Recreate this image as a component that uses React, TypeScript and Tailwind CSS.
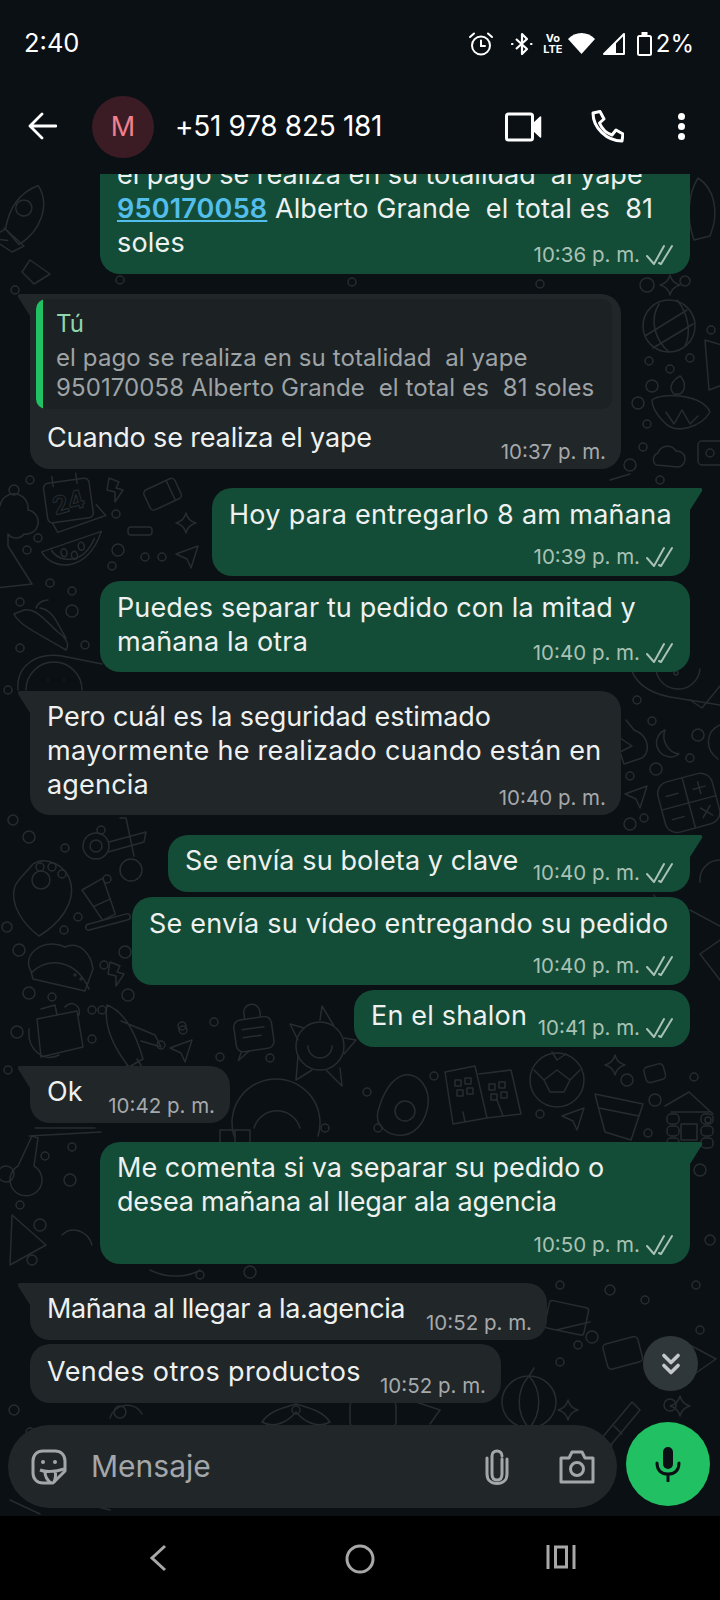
import React from 'react';
import { ChevronsDown } from 'lucide-react';

// chat wallpaper doodles, placed in page coordinates
const dots: [number, number, number][] = [
  [14, 490, 5], [30, 480, 4], [38, 538, 4], [27, 550, 4], [116, 514, 4], [118, 550, 6], [112, 566, 4], [145, 557, 4], [162, 557, 4],
  [50, 583, 4], [72, 591, 4], [72, 611, 6], [85, 645, 4], [20, 602, 4], [20, 648, 4], [8, 690, 4],
  [13, 820, 5], [29, 837, 6], [65, 848, 4], [101, 830, 4], [107, 879, 4], [78, 917, 4], [64, 930, 4], [19, 950, 6], [7, 927, 5],
  [29, 993, 6], [52, 997, 4], [92, 1010, 4], [102, 1010, 4], [128, 995, 6], [104, 965, 4], [125, 952, 6], [17, 1032, 6], [92, 1039, 4],
  [161, 1045, 4], [182, 1026, 4], [220, 1057, 4], [214, 1022, 4], [183, 1030, 4], [270, 1058, 4], [325, 1128, 4],
  [647, 285, 7], [685, 281, 5], [711, 330, 4], [649, 361, 4], [690, 358, 4], [670, 369, 4], [652, 386, 6], [638, 403, 6], [647, 424, 4], [643, 447, 4], [630, 465, 6], [660, 480, 4],
  [637, 700, 4], [652, 721, 4], [698, 735, 6], [690, 758, 4], [656, 769, 6], [630, 776, 4], [644, 818, 4], [630, 824, 6],
  [367, 1092, 4], [434, 1076, 4], [378, 1128, 4], [627, 1080, 6], [655, 1100, 6], [540, 1114, 4], [648, 1133, 4], [694, 1077, 4],
  [200, 1275, 4], [250, 1272, 6], [130, 1430, 4], [560, 1362, 4], [578, 1345, 4], [670, 1405, 6], [14, 1410, 5], [30, 1432, 4], [120, 1412, 6],
  [8, 1070, 4], [32, 1260, 5], [70, 1180, 6], [45, 1156, 4], [72, 1147, 4], [20, 1205, 4], [40, 1225, 6], [696, 1285, 4], [710, 1240, 5], [700, 1170, 6], [708, 1120, 3],
  [120, 280, 4], [352, 282, 4], [540, 284, 4], [15, 290, 4], [700, 1330, 4], [645, 1300, 4], [610, 1290, 5], [560, 1285, 4],
];

function Doodle({ x, y, r = 0, s = 1, children }: { x: number; y: number; r?: number; s?: number; children: React.ReactNode }) {
  return <g transform={`translate(${x} ${y}) rotate(${r}) scale(${s})`}>{children}</g>;
}

const Plane = () => <path d="M0 8 L22 0 L15 22 L11 13 Z" />;
const Sparkle = () => <path d="M10 0 Q12 8 20 10 Q12 12 10 20 Q8 12 0 10 Q8 8 10 0 Z" />;
const Bolt = () => <path d="M4 0 L14 4 L11 10 L18 12 L10 24 L10 14 L2 12 Z" />;

function Wallpaper() {
  return (
    <svg className="absolute inset-0 h-full w-full" viewBox="0 174 720 1342" fill="none" stroke="#272c2f" strokeWidth="1.5" strokeLinejoin="round" strokeLinecap="round">
      {dots.map(([cx, cy, r], i) => <circle key={i} cx={cx} cy={cy} r={r} />)}

      {/* top band */}
      <Doodle x={12} y={176} r={20}><path d="M28 0 C46 14 46 42 30 62 L12 52 C8 30 14 12 28 0 Z M12 52 L0 66 L18 62 M22 18 a8 8 0 1 0 .1 0 Z" /></Doodle>
      <Doodle x={0} y={224}><path d="M4 4 L24 22 L12 28 L0 20 M30 36 L50 50 L34 60 L22 48 Z" /></Doodle>
      <Doodle x={694} y={178}><path d="M4 0 C20 10 26 34 16 58 L0 62 C-8 40 -6 16 4 0 Z" /></Doodle>

      {/* left column */}
      <Doodle x={42} y={478} r={-8}>
        <rect x="0" y="6" width="46" height="40" rx="5" />
        <path d="M4 46 L8 56 L58 46 L50 34 M10 0 v10 M34 0 v10" />
        <text x="7" y="37" fontSize="25" fontFamily="Inter, sans-serif" fontWeight="700" fill="none" stroke="#272c2f" strokeWidth="1" transform="rotate(-8 20 30)">24</text>
      </Doodle>
      <Doodle x={105} y={478}><Bolt /></Doodle>
      <Doodle x={140} y={486} r={-25}><rect x="0" y="6" width="34" height="22" rx="4" /><path d="M26 6 v22" /></Doodle>
      <rect x="128" y="527" width="24" height="8" rx="3" />
      <Doodle x={176} y={513}><Sparkle /></Doodle>
      <Doodle x={176} y={546}><Plane /></Doodle>
      <Doodle x={40} y={540} r={-8}>
        <path d="M0 12 C8 32 42 40 62 0 Z M10 12 C16 26 40 30 54 6" />
        <ellipse cx="22" cy="16" rx="3" ry="4" /><ellipse cx="32" cy="20" rx="3" ry="4" /><ellipse cx="40" cy="12" rx="3" ry="4" />
      </Doodle>
      <Doodle x={-4} y={496}>
        <path d="M4 10 a14 14 0 0 1 28 4 a12 12 0 0 1 -4 24 a10 10 0 0 1 -16 0 L12 50 L36 88 L0 92" />
      </Doodle>
      <Doodle x={14} y={608}>
        <path d="M0 6 C6 18 22 24 52 42 C56 36 52 30 44 24 C34 16 24 0 10 2 Z M26 0 C40 2 44 18 52 30 M22 0 C24 -6 30 -8 34 -8" />
      </Doodle>
      <Doodle x={18} y={652}>
        <path d="M0 38 C-2 14 18 0 44 4 L84 12 M8 38 a28 28 0 0 1 56 0" />
        <path d="M30 28 v0 M46 28 v0" />
      </Doodle>

      <Doodle x={15} y={860}>
        <path d="M18 4 C30 -4 52 4 56 24 C60 44 44 64 24 76 C8 64 -6 44 0 26 C4 18 10 14 18 4 Z" />
        <circle cx="26" cy="20" r="9" /><circle cx="25" cy="7" r="4" /><circle cx="37" cy="7" r="4" /><circle cx="47" cy="14" r="4" />
      </Doodle>
      <Doodle x={82} y={832}>
        <circle cx="14" cy="14" r="13" /><circle cx="14" cy="14" r="6" />
        <path d="M27 10 L64 0 L62 10 L26 20 M38 -14 L44 -14 L52 24" /><circle cx="49" cy="38" r="11" />
      </Doodle>
      <Doodle x={82} y={890} r={-25}><path d="M0 0 L24 -2 L20 36 L6 36 Z M4 20 L22 20" /></Doodle>
      <Doodle x={85} y={925} r={-15}><rect x="0" y="0" width="46" height="6" rx="3" /></Doodle>
      <Doodle x={27} y={945}>
        <path d="M4 26 C-6 10 16 -8 38 2 C52 -4 64 8 66 24 L58 46 L6 34 Z M4 28 C22 10 50 16 62 44" />
        <circle cx="48" cy="30" r="1" /><circle cx="54" cy="34" r="1" />
      </Doodle>
      <Doodle x={106} y={962}><Bolt /></Doodle>
      <Doodle x={33} y={1005}>
        <path d="M4 14 L44 6 L50 42 L8 52 Z M8 4 L22 0 L24 10 M32 2 C40 -6 48 2 46 10 M-4 24 C-6 44 10 58 26 50" />
      </Doodle>
      <Doodle x={103} y={1005}>
        <path d="M4 0 C20 6 32 26 40 54 L26 62 C12 44 0 22 4 0 Z M18 16 L52 30 L58 42 L38 36 M24 60 L16 74 M34 54 L44 70" />
      </Doodle>
      <Doodle x={170} y={1040}><Plane /></Doodle>
      <Doodle x={232} y={1015} r={-8}>
        <rect x="0" y="6" width="38" height="32" rx="7" /><path d="M12 6 V0 a8 8 0 0 1 16 0 v6 M8 16 H30 M8 24 H26 M4 38 L0 46 L12 38" />
      </Doodle>
      <Doodle x={290} y={1010}>
        <circle cx="30" cy="36" r="24" /><path d="M18 36 a12 12 0 0 0 24 0" />
        <path d="M14 18 L0 14 L8 30 M30 10 L32 -4 L44 16 M54 28 L66 30 L54 44 M50 58 L52 76 L36 60 M22 60 L6 70 L8 46" />
      </Doodle>
      <Doodle x={220} y={1068}>
        <path d="M14 68 a44 44 0 1 1 84 0" /><path d="M34 60 a24 24 0 0 1 46 0" />
      </Doodle>
      <Doodle x={8} y={1130}>
        <path d="M10 36 L24 6 L30 8 L26 36 a16 16 0 1 1 -16 0 Z" /><circle cx="-2" cy="44" r="8" />
      </Doodle>
      <Doodle x={25} y={1128}><path d="M10 0 H70 M4 8 L76 4" /></Doodle>
      <Doodle x={2} y={1215}><path d="M10 0 L44 30 L8 50 Z M60 20 C70 10 86 16 90 30" /></Doodle>

      {/* right column */}
      <Doodle x={643} y={300}>
        <circle cx="26" cy="26" r="26" /><path d="M2 36 L44 10 M10 48 L50 24 M16 4 C6 20 12 40 26 52 M34 0 C46 14 48 34 42 46" />
      </Doodle>
      <Doodle x={660} y={275}><Sparkle /></Doodle>
      <Doodle x={652} y={376}>
        <path d="M0 24 C10 16 50 18 58 36 C50 50 24 60 12 46 C6 40 0 32 0 24 Z" /><path d="M22 18 C14 10 24 2 28 0 C34 6 34 14 28 18 Z" />
        <path d="M14 36 L22 48 L30 34 L38 48 L46 40" />
      </Doodle>
      <Doodle x={652} y={447}><path d="M4 18 a7 7 0 0 1 2 -12 a10 10 0 0 1 18 -2 a8 8 0 0 1 2 16 Z" /></Doodle>
      <Doodle x={698} y={441}><rect x="0" y="0" width="40" height="24" rx="4" /><circle cx="12" cy="12" r="4" /></Doodle>
      <Doodle x={705} y={340}><path d="M0 0 L20 6 L20 44 L4 50 Z" /></Doodle>
      <Doodle x={610} y={480}><path d="M0 0 L20 -6" /></Doodle>
      <Doodle x={650} y={665}>
        <path d="M-20 0 C-16 18 0 28 20 32 L70 40 M6 0 a22 22 0 0 0 44 4" /><circle cx="26" cy="8" r="2" />
      </Doodle>
      <Doodle x={655} y={730}><path d="M10 0 a14 14 0 1 0 14 24 a18 18 0 0 1 -14 -24 Z" /></Doodle>
      <Doodle x={620} y={722}><path d="M6 -2 L14 8 C30 14 30 30 22 36 L4 42 L0 30 L12 24 L0 16" /></Doodle>
      <Doodle x={625} y={786}><Plane /></Doodle>
      <Doodle x={655} y={785} r={-15}>
        <rect x="0" y="0" width="56" height="52" rx="12" /><path d="M0 26 H56 M28 0 V52 M8 14 H20 M36 14 H48 M42 8 V20 M38 34 L48 44 M48 34 L38 44 M8 38 H20" />
      </Doodle>
      <Doodle x={690} y={680}><path d="M0 20 L12 28 L30 6" /></Doodle>
      <Doodle x={700} y={725}><path d="M20 0 C6 6 4 24 18 34" /></Doodle>
      <Doodle x={690} y={860}><path d="M30 0 a20 20 0 0 0 -20 22 M0 50 L30 66" /></Doodle>
      <Doodle x={640} y={895}><path d="M14 0 C24 16 22 38 4 44" /></Doodle>
      <Doodle x={700} y={940}><path d="M20 0 L0 14 L20 40" /></Doodle>

      {/* under the Ok bubble */}
      <Doodle x={378} y={1075}>
        <path d="M26 0 C42 -2 52 14 50 30 C48 44 40 58 26 60 C12 62 -4 52 0 36 C4 22 12 4 26 0 Z" /><circle cx="27" cy="36" r="10" />
      </Doodle>
      <Doodle x={445} y={1066}>
        <path d="M0 6 L30 0 L42 52 L8 58 Z M34 8 L66 4 L76 48 L42 52 M18 46 L20 56 M52 34 L58 50" />
        <rect x="10" y="14" width="6" height="6" /><rect x="20" y="12" width="6" height="6" /><rect x="12" y="24" width="6" height="6" /><rect x="22" y="22" width="6" height="6" />
        <rect x="44" y="18" width="6" height="6" /><rect x="54" y="16" width="6" height="6" /><rect x="46" y="28" width="6" height="6" /><rect x="56" y="26" width="6" height="6" />
      </Doodle>
      <Doodle x={530} y={1050}>
        <circle cx="27" cy="30" r="27" /><path d="M27 20 L40 30 L34 42 L20 42 L14 30 Z M22 2 L27 10 L36 4 M4 20 L14 30 M50 20 L40 30" />
      </Doodle>
      <Doodle x={562} y={1108}><Plane /></Doodle>
      <Doodle x={605} y={1055}><Sparkle /></Doodle>
      <Doodle x={643} y={1068} r={-15}><rect x="0" y="0" width="20" height="16" rx="4" /></Doodle>
      <Doodle x={595} y={1090}><path d="M0 4 L48 14 L44 26 L36 50 L10 42 L4 20 Z M4 18 L44 26" /></Doodle>
      <Doodle x={665} y={1092}>
        <path d="M0 14 L24 0 L48 22 M6 20 H44" /><rect x="2" y="22" width="12" height="10" rx="4" /><rect x="2" y="34" width="12" height="10" rx="4" /><rect x="2" y="46" width="12" height="10" rx="4" />
        <rect x="36" y="22" width="12" height="10" rx="4" /><rect x="36" y="34" width="12" height="10" rx="4" /><rect x="36" y="46" width="12" height="10" rx="4" /><rect x="16" y="32" width="16" height="16" />
      </Doodle>

      {/* bottom band */}
      <Doodle x={262} y={1402}><path d="M34 2 C22 6 8 8 0 20 C10 26 24 22 34 10 C44 22 58 26 68 20 C60 8 46 6 34 2 Z" /><circle cx="34" cy="8" r="4" /></Doodle>
      <Doodle x={502} y={1376}>
        <ellipse cx="27" cy="26" rx="27" ry="26" /><path d="M27 0 C14 14 14 38 27 52 C40 38 40 14 27 0 M27 0 L32 -8" />
      </Doodle>
      <Doodle x={602} y={1345}><rect x="0" y="0" width="36" height="26" rx="4" transform="rotate(-15)" /><circle cx="-10" cy="-8" r="6" /></Doodle>
      <Doodle x={558} y={1400}><Sparkle /></Doodle>
      <Doodle x={590} y={1402}><path d="M0 50 L42 0 L50 8 L10 56 M14 36 L22 44 M24 24 L32 32" /></Doodle>
      <Doodle x={670} y={1396}><Sparkle /></Doodle>
      <Doodle x={690} y={1345}><path d="M0 0 L26 14 L0 32" /></Doodle>
      <Doodle x={110} y={1402}><path d="M0 16 C4 2 24 -2 32 12 M0 0 H20" /></Doodle>
      <Doodle x={320} y={1400}><rect x="30" y="0" width="46" height="28" rx="6" /><path d="M90 0 L120 10 L110 24" /></Doodle>
      <Doodle x={550} y={1300}><rect x="0" y="0" width="40" height="28" rx="3" transform="rotate(12)" /><path d="M6 30 L40 22" /></Doodle>
      <Doodle x={0} y={1500}><path d="M10 0 L40 14 M70 0 L110 10" /></Doodle>
      <Doodle x={150} y={1270}><path d="M0 0 C20 10 40 6 50 0" /></Doodle>
      <Doodle x={220} y={1130}><path d="M0 0 H30 V16 H0 Z M15 0 V16" /></Doodle>
    </svg>
  );
}

function Ticks() {
  return (
    <svg width="27" height="22" viewBox="0 0 27 22" fill="none" stroke="#a8c2b5" strokeWidth="2" strokeLinecap="round" strokeLinejoin="round">
      <path d="M1 12 L8 20 L18 2 M13 19 L15 20 L26 2" />
    </svg>
  );
}

type BubbleProps = {
  out?: boolean;
  tail?: boolean;
  time: string;
  className: string;
  children?: React.ReactNode;
};

function Bubble({ out, tail, time, className, children }: BubbleProps) {
  return (
    <div className={`relative rounded-[20px] text-[#eef1f0] ${out ? 'self-end bg-[#144d37]' : 'self-start bg-[#212629]'} ${tail ? (out ? 'rounded-tr-none' : 'rounded-tl-none') : ''} ${className}`}>
      {tail && out && (
        <svg className="absolute left-full top-0" width="13" height="22" viewBox="0 0 13 22"><path d="M0 0 H10 Q13 0 12 3 L0 22 Z" fill="#144d37" /></svg>
      )}
      {tail && !out && (
        <svg className="absolute right-full top-0" width="13" height="22" viewBox="0 0 13 22"><path d="M13 0 H3 Q0 0 1 3 L13 22 Z" fill="#212629" /></svg>
      )}
      <div className="whitespace-pre text-[27px] leading-[34px] tracking-[0.2px]">{children}</div>
      <div className={`absolute flex items-center gap-[6px] text-[20.5px] leading-[24px] ${out ? 'bottom-[7px] right-[17px] text-[#a8c2b5]' : 'bottom-[5px] right-[15px] text-[#a5a9ab]'}`}>
        <span>{time}</span>
        {out && <Ticks />}
      </div>
    </div>
  );
}

function StatusBar() {
  return (
    <div className="flex h-[86px] items-center pl-[24px] pr-[26px] pt-[1px] text-white">
      <span className="text-[25.5px]">2:40</span>
      <div className="ml-auto flex items-center">
        <svg width="26" height="24" viewBox="0 0 26 24" fill="none" stroke="white" strokeWidth="2" strokeLinecap="round">
          <circle cx="13" cy="13.5" r="9" /><path d="M13 8.5 V14 H17 M2 5 L6 1.5 M24 5 L20 1.5" />
        </svg>
        <svg className="ml-[17px]" width="22" height="24" viewBox="0 0 22 24" fill="none" stroke="white" strokeWidth="2.2" strokeLinejoin="round">
          <path d="M5 7 L16 17 L11 22 V2 L16 7 L5 17" /><path d="M1 12 h.5 M20 12 h.5" strokeLinecap="round" />
        </svg>
        <div className="ml-[10px] flex w-[20px] flex-col items-center text-[11px] font-bold leading-[11px]">
          <span>Vo</span><span>LTE</span>
        </div>
        <svg className="ml-[5px]" width="27" height="21" viewBox="0 0 27 21" fill="white"><path d="M0 6 C7 -2 20 -2 27 6 L13.5 21 Z" /></svg>
        <svg className="ml-[8px]" width="22" height="22" viewBox="0 0 22 22" fill="none">
          <path d="M21 1 V21 H1 Z" stroke="white" strokeWidth="2" strokeLinejoin="round" /><path d="M1 21 L13 9 V21 Z" fill="white" />
        </svg>
        <svg className="ml-[12px]" width="15" height="24" viewBox="0 0 15 24" fill="none">
          <rect x="1" y="4" width="13" height="19" rx="1.5" stroke="white" strokeWidth="2" /><rect x="4.5" y="0" width="6" height="4" fill="white" />
        </svg>
        <span className="ml-[4px] text-[24px]">2%</span>
      </div>
    </div>
  );
}

function Toolbar() {
  return (
    <div className="flex h-[88px] items-start pl-[28px] pr-[35px] pt-[10px] text-white">
      <svg className="mt-[16px]" width="29" height="28" viewBox="0 0 29 28" fill="none" stroke="white" strokeWidth="2.8" strokeLinecap="round" strokeLinejoin="round">
        <path d="M2 14 H28 M14 2 L2 14 L14 26" />
      </svg>
      <div className="ml-[35px] flex h-[62px] w-[62px] items-center justify-center rounded-full bg-[#3b1c25] text-[27px] text-[#f0808f]">M</div>
      <span className="ml-[21px] mt-[12px] text-[28px] leading-[36px] tracking-[-0.3px]">+51 978 825 181</span>
      <svg className="ml-auto mt-[16px]" width="37" height="30" viewBox="0 0 37 30" fill="none" stroke="white" strokeWidth="3" strokeLinejoin="round">
        <rect x="1.5" y="2" width="26" height="26" rx="2" /><path d="M28 12 L35.5 5 V25 L28 18 Z" fill="white" strokeWidth="1.5" />
      </svg>
      <svg className="ml-[49px] mt-[14px]" width="33" height="33" viewBox="0 0 33 33" fill="none" stroke="white" strokeWidth="3" strokeLinejoin="round">
        <path d="M2 3 L9 1.5 L13 9 L8.5 13 C11 19 15 23 21 25 L25 20 L32 24 L31 31 C16 31 2 18 2 3 Z" />
      </svg>
      <div className="ml-[54px] mt-[17px] flex flex-col gap-[3px]">
        <span className="h-[7px] w-[7px] rounded-full bg-white" /><span className="h-[7px] w-[7px] rounded-full bg-white" /><span className="h-[7px] w-[7px] rounded-full bg-white" />
      </div>
    </div>
  );
}

function Composer() {
  return (
    <div className="relative flex items-start gap-[9px] pl-[8px] pr-[10px]">
      <div className="flex h-[83px] w-[609px] items-center rounded-[42px] bg-[#212629] pl-[23px] pr-[22px] text-[#a4a7a9]">
        <svg width="36" height="36" viewBox="0 0 36 36" fill="none" stroke="currentColor" strokeWidth="3" strokeLinejoin="round">
          <path d="M12 2 H24 C30 2 34 6 34 12 V22 L22 34 H12 C6 34 2 30 2 24 V12 C2 6 6 2 12 2 Z" />
          <path d="M9 21 C14 23 24 23 33 20 M14 23 C14 28 16 31 20 34 M24 22 C25 26 25 29 23 33" />
          <circle cx="12" cy="13" r="2" fill="currentColor" stroke="none" /><circle cx="24" cy="13" r="2" fill="currentColor" stroke="none" />
        </svg>
        <span className="ml-[24px] text-[30px]">Mensaje</span>
        <svg className="ml-auto" width="24" height="36" viewBox="0 0 24 36" fill="none" stroke="currentColor" strokeWidth="3" strokeLinecap="round">
          <path d="M17 10 V25 C17 29 15 31 12 31 C9 31 7 29 7 25 V7 C7 4 9 2 12 2 C15 2 17 4 17 7 M22 10 V25 C22 31 18 34.5 12 34.5 C6 34.5 2 31 2 25 V9" />
        </svg>
        <svg className="ml-[50px]" width="36" height="34" viewBox="0 0 36 34" fill="none" stroke="currentColor" strokeWidth="3" strokeLinejoin="round">
          <path d="M2 8 H10 L13 2 H23 L26 8 H34 V32 H2 Z" /><circle cx="18" cy="19" r="6.5" />
        </svg>
      </div>
      <div className="mt-[-3px] flex h-[84px] w-[84px] items-center justify-center rounded-full bg-[#21c063]">
        <svg width="26" height="36" viewBox="0 0 26 36" fill="none" stroke="#0b1014" strokeWidth="3" strokeLinecap="round">
          <rect x="8" y="1" width="10" height="22" rx="5" fill="#0b1014" stroke="none" /><path d="M2 17 C2 25 7 28 13 28 C19 28 24 25 24 17 M13 28 V35" />
        </svg>
      </div>
    </div>
  );
}

function NavBar() {
  return (
    <div className="flex h-[84px] items-start bg-black pl-[148px] pt-[28px] text-[#a8a8a8]">
      <svg width="20" height="28" viewBox="0 0 20 28" fill="none" stroke="currentColor" strokeWidth="3"><path d="M17 2 L4 14 L17 26" /></svg>
      <svg className="ml-[177px]" width="30" height="30" viewBox="0 0 30 30" fill="none" stroke="currentColor" strokeWidth="3"><circle cx="15" cy="15" r="13" /></svg>
      <svg className="ml-[171px]" width="30" height="26" viewBox="0 0 30 26" fill="none" stroke="currentColor" strokeWidth="3"><path d="M2 1 V25 M28 1 V25" /><rect x="9.5" y="3" width="11" height="20" /></svg>
    </div>
  );
}

export default function App() {
  return (
    <div className="flex h-[1600px] w-[720px] flex-col overflow-hidden bg-[#0b1014] [font-family:Inter,sans-serif]">
      <StatusBar />
      <Toolbar />
      <div className="relative flex flex-1 flex-col overflow-hidden">
        <Wallpaper />
        <div className="relative flex h-[1251px] flex-col pl-[30px] pr-[30px]">
          <Bubble out time="10:36 p. m." className="mt-[-21px] w-[590px] pb-[14px] pl-[17px] pt-[5px]">
            <span className="tracking-[0px]">el pago se realiza en su totalidad  al yape</span>{'\n'}
            <span className="font-semibold text-[#53bdeb] underline underline-offset-2">950170058</span><span className="tracking-[0.1px]"> Alberto Grande  el total es  81</span>{'\n'}
            soles
          </Bubble>
          <Bubble tail time="10:37 p. m." className="mt-[20px] w-[591px] pb-[14px] pl-[6px] pr-[9px] pt-[5px]">
            <div className="flex h-[110px] overflow-hidden rounded-[10px] bg-[#1c2124]">
              <div className="w-[7px] rounded-l-[10px] bg-[#21c063]" />
              <div className="pl-[13px] pt-[10px] text-[24px] leading-[30px] tracking-[0.1px] text-[#9ea3a6]">
                <div className="text-[#8fd6ae]">Tú</div>
                <div className="mt-[4px]">el pago se realiza en su totalidad  al yape</div>
                <div>950170058 Alberto Grande  el total es  81 soles</div>
              </div>
            </div>
            <div className="pl-[11px] pt-[12px] tracking-[-0.15px]">Cuando se realiza el yape</div>
          </Bubble>
          <Bubble out tail time="10:39 p. m." className="mt-[19px] w-[478px] pb-[44px] pl-[17px] pt-[10px]"><span className="tracking-[0.3px]">Hoy para entregarlo 8 am mañana</span></Bubble>
          <Bubble out time="10:40 p. m." className="mt-[5px] w-[590px] pb-[13px] pl-[17px] pt-[10px]"><span className="tracking-[0.12px]">Puedes separar tu pedido con la mitad y</span>{'\n'}mañana la otra</Bubble>
          <Bubble tail time="10:40 p. m." className="mt-[19px] w-[591px] pb-[13px] pl-[17px] pt-[9px]"><span className="tracking-[-0.07px]">Pero cuál es la seguridad estimado</span>{'\n'}<span className="tracking-[0.3px]">mayormente he realizado cuando están en</span>{'\n'}agencia</Bubble>
          <Bubble out tail time="10:40 p. m." className="mt-[20px] w-[522px] pb-[14px] pl-[17px] pt-[9px]"><span className="tracking-[0.1px]">Se envía su boleta y clave</span></Bubble>
          <Bubble out time="10:40 p. m." className="mt-[5px] w-[558px] pb-[44px] pl-[17px] pt-[10px]">Se envía su vídeo entregando su pedido</Bubble>
          <Bubble out time="10:41 p. m." className="mt-[5px] w-[336px] pb-[14px] pl-[17px] pt-[9px]">En el shalon</Bubble>
          <Bubble tail time="10:42 p. m." className="mt-[19px] w-[200px] pb-[14px] pl-[17px] pt-[9px]">Ok</Bubble>
          <Bubble out tail time="10:50 p. m." className="mt-[19px] w-[590px] pb-[45px] pl-[17px] pt-[9px]"><span className="tracking-[0px]">Me comenta si va separar su pedido o</span>{'\n'}<span className="tracking-[-0.2px]">desea mañana al llegar ala agencia</span></Bubble>
          <Bubble tail time="10:52 p. m." className="mt-[19px] w-[517px] pb-[14px] pl-[17px] pt-[9px]"><span className="tracking-[-0.4px]">Mañana al llegar a la.agencia</span></Bubble>
          <Bubble time="10:52 p. m." className="mt-[4px] w-[471px] pb-[14px] pl-[17px] pt-[11px]"><span className="tracking-[0.4px]">Vendes otros productos</span></Bubble>
        </div>
        <div className="absolute left-[643px] top-[1162px] flex h-[55px] w-[55px] items-center justify-center rounded-full bg-[#30373b] text-[#c4c8ca]">
          <ChevronsDown size={34} strokeWidth={2.5} />
        </div>
        <Composer />
      </div>
      <NavBar />
    </div>
  );
}
